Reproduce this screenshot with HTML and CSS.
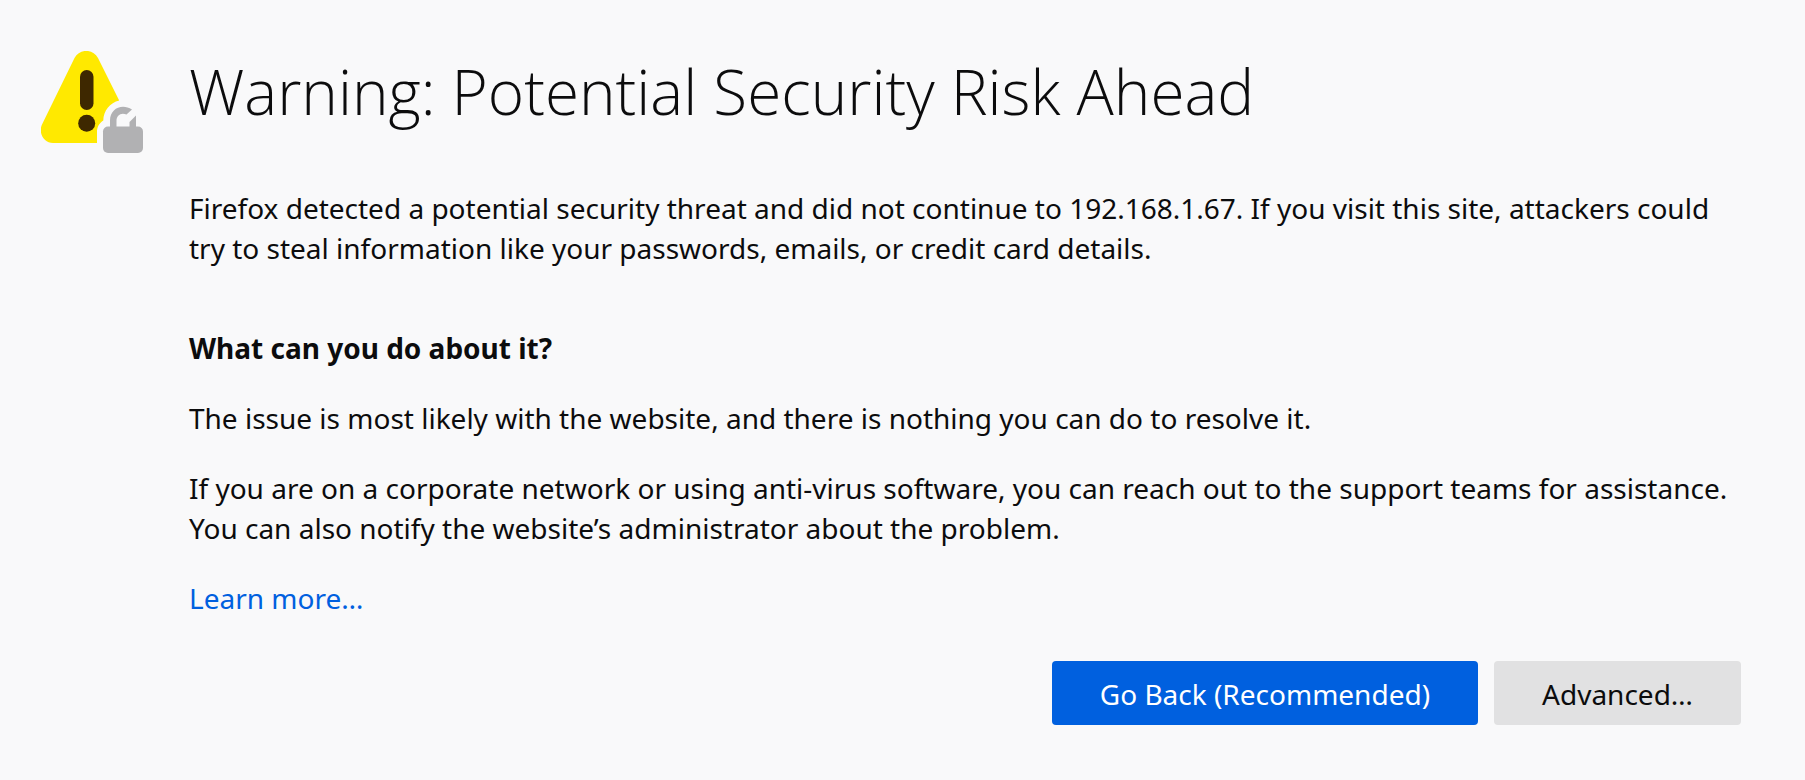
FILE: index.html
```html
<!DOCTYPE html>
<html lang="en">
<head>
    <meta charset="UTF-8">
    <meta name="viewport" content="width=device-width, initial-scale=1.0">
    <title>Warning: Potential Security Risk Ahead</title>
    <link rel="stylesheet" href="styles.css">
</head>
<body>
    <div class="container">
        <svg class="icon" viewBox="0 0 104 104" aria-hidden="true">
            <path fill="#ffe900" d="M33.500 7C38.500 -2.500 52 -2.500 57 7L78.200 49.500C69 51.500 62.300 60 62.300 69.500C58.300 72 56 76 56 81V92H12C3 92 -3 82 1 73.500Z"/>
            <rect x="39" y="19" width="13.500" height="40" rx="6.750" fill="#3e2800"/>
            <circle cx="45.700" cy="72.300" r="8.500" fill="#3e2800"/>
            <rect x="62" y="75.500" width="40" height="26.500" rx="5" fill="#b1b1b3"/>
            <path fill="#b1b1b3" d="M69 77V69.500C69 57.500 81 52 91 58.500L85.500 63.500C80 61 75.500 64.500 75.500 69.500V77Z"/>
            <path fill="#b1b1b3" d="M88.500 77V71L95 64.500V77Z"/>
        </svg>
        <div class="text">
            <h1>Warning: Potential Security Risk Ahead</h1>
            <p class="intro">Firefox detected a potential security threat and did not continue to 192.168.1.67. If you visit this site, attackers could try to steal information like your passwords, emails, or credit card details.</p>
            <h2>What can you do about it?</h2>
            <p>The issue is most likely with the website, and there is nothing you can do to resolve it.</p>
            <p>If you are on a corporate network or using anti-virus software, you can reach out to the support teams for assistance. You can also notify the website’s administrator about the problem.</p>
            <p><a href="#">Learn more…</a></p>
            <div class="buttons">
                <button class="primary">Go Back (Recommended)</button>
                <button>Advanced…</button>
            </div>
        </div>
    </div>
</body>
</html>
```

FILE: styles.css
```css
*{
    margin: 0;
    padding: 0;
    box-sizing: border-box;
}
body{
    background-color: #f9f9fa;
    color: #0c0c0d;
    font-family: "Segoe UI", "Noto Sans", sans-serif;
    font-size: 28px;
    line-height: 40px;
}
.container{
    display: flex;
    gap: 44px;
    padding: 51px 64px 56px 41px;
}
.icon{
    width: 104px;
    height: 104px;
    flex-shrink: 0;
}
.text{
    flex: 1;
}
h1{
    font-family: "Segoe UI", "Open Sans", sans-serif;
    font-size: 62px;
    font-weight: 300;
    line-height: 80px;
    margin-bottom: 57px;
}
h2{
    font-size: 28px;
    font-weight: 700;
}
p{
    margin-top: 30px;
}
.intro{
    margin-top: 0;
    margin-bottom: 60px;
}
a{
    color: #0060df;
    text-decoration: none;
}
.buttons{
    display: flex;
    justify-content: flex-end;
    gap: 16px;
    margin-top: 43px;
}
button{
    height: 64px;
    padding: 2px 48px 0;
    border: none;
    border-radius: 4px;
    background-color: #e1e1e2;
    color: #0c0c0d;
    font: inherit;
}
.primary{
    background-color: #0060df;
    color: white;
}
```
